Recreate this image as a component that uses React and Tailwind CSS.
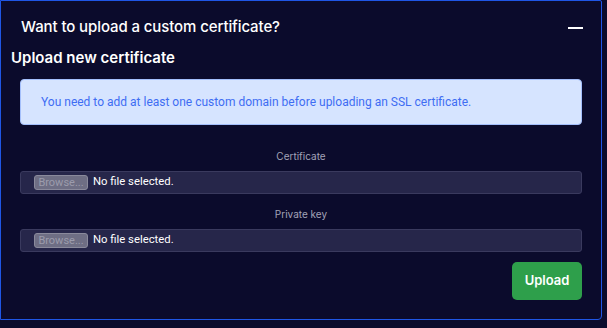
import React from "react"

const FileRow = ({ label }) => {
  return (
    <div className="flex flex-col items-center">
      <label className="text-[10px] text-[#a3a3b8] leading-none mb-[10px]">{label}</label>
      <div className="w-full h-[23px] bg-[#26264a] border border-[#3a3a5e] rounded-[3px] flex items-center pl-[13px]">
        <span className="h-[15px] w-[54px] bg-[#6e6e84] border border-[#8a8a9c] rounded-[3px] text-[11px] leading-[13px] text-[#9c9cac] text-center" style={{ fontFamily: "Roboto, sans-serif" }}>
          Browse...
        </span>
        <span className="ml-[5px] text-[11.3px] text-white" style={{ fontFamily: "Roboto, sans-serif" }}>No file selected.</span>
      </div>
    </div>
  )
}

const App = () => {
  return (
    <div className="w-[607px] h-[328px] bg-[#0b0b2c]" style={{ fontFamily: "Inter, sans-serif" }}>
      <div className="w-[602px] h-[320px] border border-[#1f56e6] rounded-br-[4px] rounded-tr-[2px] flex flex-col">
        <div className="flex items-center justify-between h-[47px] pt-[6px] pl-[20px] pr-[18px]">
          <span className="text-[15px] font-medium text-white tracking-[-0.1px]">Want to upload a custom certificate?</span>
          <span className="w-[15px] h-[2px] bg-white"></span>
        </div>
        <div className="px-[19px] flex flex-col">
          <h2 className="text-[15px] font-semibold text-white -ml-[9px] leading-none mt-[2px]">Upload new certificate</h2>
          <div className="mt-[14px] h-[46px] bg-[#d6e4ff] border border-[#a4bffb] rounded-[4px] flex items-center pl-[20px]">
            <span className="text-[12px] text-[#3e6df3]" style={{ fontFamily: "Roboto, sans-serif" }}>
              You need to add at least one custom domain before uploading an SSL certificate.
            </span>
          </div>
          <div className="mt-[26px]">
            <FileRow label="Certificate" />
          </div>
          <div className="mt-[15px]">
            <FileRow label="Private key" />
          </div>
          <div className="flex justify-end mt-[10px]">
            <button className="w-[70px] h-[38px] bg-[#2e9f4b] rounded-[5px] text-white text-[13px] font-semibold">Upload</button>
          </div>
        </div>
      </div>
    </div>
  )
}

export default App
